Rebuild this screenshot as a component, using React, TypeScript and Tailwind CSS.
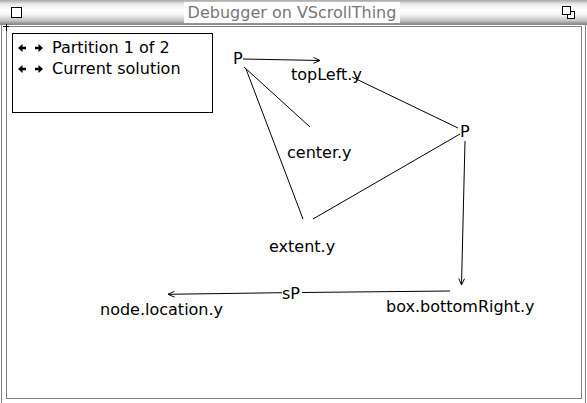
const font = "font-['DejaVu_Sans','Bitstream_Vera_Sans',sans-serif]";

type Pt = [number, number];

// page coordinates of the constraint graph edges
const edges: { a: Pt; b: Pt; arrow?: boolean }[] = [
  { a: [243, 59], b: [320, 60.5], arrow: true },
  { a: [244, 67], b: [310, 127] },
  { a: [246, 69], b: [303, 219] },
  { a: [352, 77], b: [458, 128] },
  { a: [460, 134], b: [313, 219] },
  { a: [465, 141], b: [461.5, 285], arrow: true },
  { a: [450, 291], b: [302, 292.5] },
  { a: [282, 292.7], b: [168, 294.3], arrow: true },
];

function Head({ a, b }: { a: Pt; b: Pt }) {
  const ang = Math.atan2(b[1] - a[1], b[0] - a[0]);
  const len = 7;
  const spread = 0.42;
  const p1: Pt = [b[0] - len * Math.cos(ang - spread), b[1] - len * Math.sin(ang - spread)];
  const p2: Pt = [b[0] - len * Math.cos(ang + spread), b[1] - len * Math.sin(ang + spread)];
  return (
    <polyline
      points={`${p1[0]},${p1[1]} ${b[0]},${b[1]} ${p2[0]},${p2[1]}`}
      fill="none"
      stroke="black"
      strokeWidth={1}
    />
  );
}

function Arrow({ dir }: { dir: "left" | "right" }) {
  return (
    <svg width="8" height="8" viewBox="0 0 8 8" className="shrink-0">
      {dir === "left" ? (
        <>
          <polygon points="0,4 4.5,0 4.5,8" fill="black" />
          <rect x="3" y="2.75" width="5" height="2.5" fill="black" />
        </>
      ) : (
        <>
          <polygon points="8,4 3.5,0 3.5,8" fill="black" />
          <rect x="0" y="2.75" width="5" height="2.5" fill="black" />
        </>
      )}
    </svg>
  );
}

function LegendRow({ label }: { label: string }) {
  return (
    <div className="flex items-center h-[21px]">
      <Arrow dir="left" />
      <div className="w-[9px]" />
      <Arrow dir="right" />
      <span className="ml-[9px]">{label}</span>
    </div>
  );
}

function TitleBar() {
  return (
    <div className="h-[25px] flex items-start px-[11px] bg-[linear-gradient(to_bottom,#a8a8a8_0px,#c8c8c8_2px,#e8e8e8_4px,#f6f6f6_7px,#ffffff_10px,#f4f4f4_15px,#d8d8d8_18px,#c0c0c0_21px,#8a8a8a_24px)]">
      {/* close box */}
      <div className="mt-[7px] w-[11px] h-[11px] border border-black bg-white" />
      <div className="flex-1 flex justify-center">
        <div className="mt-[2px] h-[21px] px-[4px] bg-white text-[16px] leading-[21px] text-[#777777]">
          Debugger on VScrollThing
        </div>
      </div>
      {/* collapse box */}
      <svg width="14" height="14" viewBox="0 0 14 14" className="mt-[6px]">
        <rect x="5.5" y="5.5" width="7" height="7" fill="white" stroke="black" />
        <rect x="0.5" y="0.5" width="8" height="8" fill="white" stroke="black" />
      </svg>
    </div>
  );
}

export default function App() {
  return (
    <div className={`w-[587px] h-[403px] bg-white flex flex-col overflow-hidden relative ${font}`}>
      <TitleBar />

      <div className="flex-1 mx-[1px] border-x border-[#808080] flex flex-col">
        <div className="flex-1 mt-[1px] mb-[4px] ml-[4px] mr-[3px] border border-[#808080] relative text-[16px] text-black">
          {/* legend */}
          <div className="ml-[5px] mt-[6px] w-[201px] h-[80px] border border-black pt-[3px] pl-[5px]">
            <LegendRow label="Partition 1 of 2" />
            <LegendRow label="Current solution" />
          </div>

          <svg className="absolute inset-0 w-full h-full overflow-visible pointer-events-none">
            <g transform="translate(-7,-27)">
              {edges.map((e, i) => (
                <g key={i}>
                  <line x1={e.a[0]} y1={e.a[1]} x2={e.b[0]} y2={e.b[1]} stroke="black" strokeWidth={1} />
                  {e.arrow && <Head a={e.a} b={e.b} />}
                </g>
              ))}
            </g>
          </svg>

          {/* graph nodes */}
          <span className="absolute left-[226px] top-[22px] leading-[19px]">P</span>
          <span className="absolute left-[284px] top-[38px] leading-[19px]">topLeft.y</span>
          <span className="absolute left-[280px] top-[116px] leading-[19px]">center.y</span>
          <span className="absolute left-[453px] top-[95px] leading-[19px]">P</span>
          <span className="absolute left-[262px] top-[210px] leading-[19px]">extent.y</span>
          <span className="absolute left-[275px] top-[257px] leading-[19px]">sP</span>
          <span className="absolute left-[93px] top-[273px] leading-[19px]">node.location.y</span>
          <span className="absolute left-[379px] top-[270px] leading-[19px]">box.bottomRight.y</span>
        </div>
      </div>

      {/* corner mark */}
      <svg width="7" height="7" className="absolute left-[3px] top-[24px]">
        <line x1="3.5" y1="0" x2="3.5" y2="7" stroke="black" />
        <line x1="0" y1="2.5" x2="6" y2="2.5" stroke="black" />
      </svg>
    </div>
  );
}
